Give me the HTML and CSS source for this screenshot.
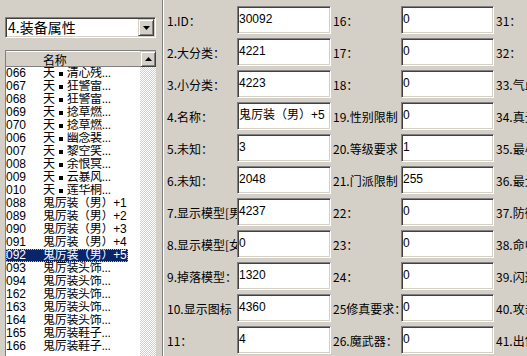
FILE: index.html
```html
<!DOCTYPE html>
<html lang="zh-CN">
<head>
    <meta charset="UTF-8">
    <title>装备属性</title>
    <link rel="stylesheet" href="styles.css">
</head>
<body>
<div class="app">
    <aside class="side">
        <div class="combo">
            <span class="combo-text">4.装备属性</span>
            <span class="combo-btn">
                <svg width="7" height="4" viewBox="0 0 7 4"><path d="M0 0h7L3.5 4z" fill="#000"/></svg>
            </span>
        </div>

        <div class="list">
            <div class="list-body">
                <div class="list-head"><span class="c-id"></span><span class="c-name">名称</span></div>
                <div class="row"><span class="c-id">066</span><span class="c-name">天<span class="dot"></span>清心残...</span></div>
                <div class="row"><span class="c-id">067</span><span class="c-name">天<span class="dot"></span>狂警雷...</span></div>
                <div class="row"><span class="c-id">068</span><span class="c-name">天<span class="dot"></span>狂警雷...</span></div>
                <div class="row"><span class="c-id">069</span><span class="c-name">天<span class="dot"></span>捻草燃...</span></div>
                <div class="row"><span class="c-id">070</span><span class="c-name">天<span class="dot"></span>捻草燃...</span></div>
                <div class="row"><span class="c-id">006</span><span class="c-name">天<span class="dot"></span>幽念裴...</span></div>
                <div class="row"><span class="c-id">007</span><span class="c-name">天<span class="dot"></span>黎空笑...</span></div>
                <div class="row"><span class="c-id">008</span><span class="c-name">天<span class="dot"></span>余恨冥...</span></div>
                <div class="row"><span class="c-id">009</span><span class="c-name">天<span class="dot"></span>云暴风...</span></div>
                <div class="row"><span class="c-id">010</span><span class="c-name">天<span class="dot"></span>莲华桐...</span></div>
                <div class="row"><span class="c-id">088</span><span class="c-name">鬼厉装（男）+1</span></div>
                <div class="row"><span class="c-id">089</span><span class="c-name">鬼厉装（男）+2</span></div>
                <div class="row"><span class="c-id">090</span><span class="c-name">鬼厉装（男）+3</span></div>
                <div class="row"><span class="c-id">091</span><span class="c-name">鬼厉装（男）+4</span></div>
                <div class="row selected"><span class="c-id">092</span><span class="c-name">鬼厉装（男）+5</span></div>
                <div class="row"><span class="c-id">093</span><span class="c-name">鬼厉装头饰...</span></div>
                <div class="row"><span class="c-id">094</span><span class="c-name">鬼厉装头饰...</span></div>
                <div class="row"><span class="c-id">162</span><span class="c-name">鬼厉装头饰...</span></div>
                <div class="row"><span class="c-id">163</span><span class="c-name">鬼厉装头饰...</span></div>
                <div class="row"><span class="c-id">164</span><span class="c-name">鬼厉装头饰...</span></div>
                <div class="row"><span class="c-id">165</span><span class="c-name">鬼厉装鞋子...</span></div>
                <div class="row"><span class="c-id">166</span><span class="c-name">鬼厉装鞋子...</span></div>
            </div>
            <div class="vscroll">
                <div class="sb-btn">
                    <svg width="7" height="4" viewBox="0 0 7 4"><path d="M3.5 0L7 4H0z" fill="#000"/></svg>
                </div>
                <div class="sb-track"></div>
            </div>
        </div>
    </aside>

    <main class="form">
        <div class="grid">
            <label class="lbl">1.ID：</label><div class="field">30092</div>
            <label class="lbl">16：</label><div class="field">0</div>
            <label class="lbl">31：</label><div class="field"></div>

            <label class="lbl">2.大分类：</label><div class="field">4221</div>
            <label class="lbl">17：</label><div class="field">0</div>
            <label class="lbl">32：</label><div class="field"></div>

            <label class="lbl">3.小分类：</label><div class="field">4223</div>
            <label class="lbl">18：</label><div class="field">0</div>
            <label class="lbl">33.气血上限</label><div class="field"></div>

            <label class="lbl">4.名称：</label><div class="field">鬼厉装（男）+5</div>
            <label class="lbl">19.性别限制</label><div class="field">0</div>
            <label class="lbl">34.真元上限</label><div class="field"></div>

            <label class="lbl">5.未知：</label><div class="field">3</div>
            <label class="lbl">20.等级要求</label><div class="field">1</div>
            <label class="lbl">35.最小攻击</label><div class="field"></div>

            <label class="lbl">6.未知：</label><div class="field">2048</div>
            <label class="lbl">21.门派限制</label><div class="field">255</div>
            <label class="lbl">36.最大攻击</label><div class="field"></div>

            <label class="lbl">7.显示模型[男]</label><div class="field">4237</div>
            <label class="lbl">22：</label><div class="field">0</div>
            <label class="lbl">37.防御</label><div class="field"></div>

            <label class="lbl">8.显示模型[女]</label><div class="field">0</div>
            <label class="lbl">23：</label><div class="field">0</div>
            <label class="lbl">38.命中</label><div class="field"></div>

            <label class="lbl">9.掉落模型：</label><div class="field">1320</div>
            <label class="lbl">24：</label><div class="field">0</div>
            <label class="lbl">39.闪避</label><div class="field"></div>

            <label class="lbl">10.显示图标</label><div class="field">4360</div>
            <label class="lbl">25修真要求：</label><div class="field">0</div>
            <label class="lbl">40.攻击速度</label><div class="field"></div>

            <label class="lbl">11：</label><div class="field">4</div>
            <label class="lbl">26.魔武器：</label><div class="field">0</div>
            <label class="lbl">41.出售价格</label><div class="field"></div>
        </div>
    </main>
</div>
</body>
</html>
```

FILE: styles.css
```css
body {
    margin: 0;
    background-color: #d4d0c8;
    font-family: "Noto Sans CJK SC", sans-serif;
    font-size: 12px;
    color: #000;
    overflow: hidden;
}

.app {
    display: flex;
    width: 527px;
    height: 356px;
    overflow: hidden;
}

/* left panel */
.side {
    width: 162px;
    flex: none;
    box-sizing: border-box;
    padding: 17px 0 0 5px;
    display: flex;
    flex-direction: column;
}

.combo {
    width: 151px;
    height: 21px;
    box-sizing: border-box;
    display: flex;
    align-items: center;
    background-color: #fff;
    border-top: 1px solid #808080;
    border-left: 1px solid #808080;
    border-right: 1px solid #fff;
    border-bottom: 1px solid #fff;
    box-shadow: inset 1px 1px #404040, inset -1px -1px #d4d0c8;
}

.combo-text {
    flex: 1;
    font-size: 14px;
    line-height: 17px;
    padding-left: 2px;
}

.combo-btn,
.sb-btn {
    width: 16px;
    height: 16px;
    box-sizing: border-box;
    display: flex;
    align-items: center;
    justify-content: center;
    background-color: #d4d0c8;
    border-top: 1px solid #d4d0c8;
    border-left: 1px solid #d4d0c8;
    border-right: 1px solid #404040;
    border-bottom: 1px solid #404040;
    box-shadow: inset 1px 1px #fff, inset -1px -1px #808080;
}

.combo-btn {
    height: 17px;
    margin-right: 1px;
}

.list {
    margin-top: 12px;
    width: 151px;
    flex: 1;
    display: flex;
    background-color: #fff;
    border-top: 1px solid #808080;
    border-left: 1px solid #808080;
    box-sizing: border-box;
    overflow: hidden;
}

.list-body {
    flex: 1;
    font-family: "Liberation Sans", "Noto Sans CJK SC", sans-serif;
}

.list-head {
    display: flex;
    height: 16px;
    line-height: 15px;
    background-color: #d4d0c8;
    box-shadow: inset 0 1px #fff, inset 0 -1px #808080;
    font-family: "Noto Sans CJK SC", sans-serif;
}

.row {
    display: flex;
    width: 122px;
    height: 13px;
    line-height: 13px;
    white-space: nowrap;
}

.c-id {
    width: 37px;
    flex: none;
}

.c-name {
    width: 85px;
    flex: none;
    overflow: hidden;
    display: flex;
    align-items: center;
    letter-spacing: -0.3px;
}

.dot {
    width: 12px;
    height: 13px;
    flex: none;
    display: flex;
    align-items: center;
    justify-content: center;
}

.dot::before {
    content: "";
    width: 4px;
    height: 4px;
    background-color: #000;
}

.row.selected {
    background-color: #0a246a;
    color: #fff;
    outline: 1px dotted #c8c070;
    outline-offset: -1px;
}

.vscroll {
    width: 16px;
    flex: none;
    display: flex;
    flex-direction: column;
}

.sb-track {
    flex: 1;
    background: repeating-conic-gradient(#fff 0 25%, #d4d0c8 0 50%) 0 0 / 2px 2px;
}

/* right panel */
.form {
    flex: 1;
    border-left: 1px solid #808080;
    box-shadow: inset 1px 0 #fff;
    padding: 6px 0 0 2px;
    overflow: hidden;
}

.grid {
    display: grid;
    grid-template-columns: 72px 94px 70px 93px 72px 94px;
    grid-auto-rows: 28px;
    row-gap: 4px;
}

.lbl {
    display: flex;
    align-items: center;
    padding-left: 2px;
    white-space: nowrap;
    overflow: hidden;
}

.field {
    box-sizing: border-box;
    background-color: #fff;
    border-top: 1px solid #808080;
    border-left: 1px solid #808080;
    border-right: 1px solid #fff;
    border-bottom: 1px solid #fff;
    box-shadow: inset 1px 1px #404040, inset -1px -1px #d4d0c8;
    padding-left: 1px;
    font-family: "Liberation Sans", "Noto Sans CJK SC", sans-serif;
    line-height: 25px;
    white-space: nowrap;
    overflow: hidden;
}
```
